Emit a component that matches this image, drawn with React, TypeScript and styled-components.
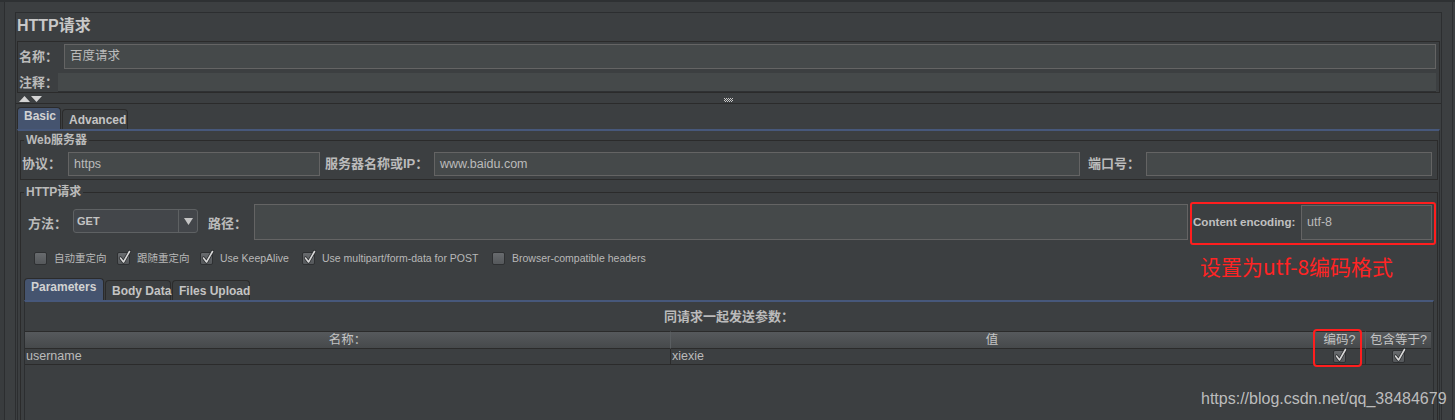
import React from "react";
import styled, { createGlobalStyle } from "styled-components";

const SANS = `"Liberation Sans", "Noto Sans CJK SC", sans-serif`;
const CJK = `"Noto Sans CJK SC", "Liberation Sans", sans-serif`;

const GlobalStyle = createGlobalStyle`
  html, body { margin: 0; padding: 0; background: #3c3f41; }
  body { font-family: ${SANS}; color: #bbbbbb; font-size: 12px; }
  *, *::before, *::after { box-sizing: border-box; }
`;

const Page = styled.div`
  position: relative;
  width: 1455px;
  height: 420px;
  overflow: hidden;
  background: #3c3f41;
  display: flex;
  flex-direction: column;
`;
const TopStrip = styled.div`
  flex: none;
  height: 2px;
  background: #2e3133;
`;
const Body = styled.div`
  flex: 1;
  display: flex;
  align-items: flex-start;
  min-height: 0;
`;
const LeftRail = styled.div`
  flex: none;
  width: 5px;
  align-self: stretch;
  background: #393c3e;
  border-right: 1px solid #2c2e30;
`;
const RightRail = styled.div`
  flex: none;
  width: 3px;
  align-self: stretch;
  margin-left: 10px;
  border-left: 1px solid #2c2e30;
`;
const Main = styled.div`
  flex: none;
  width: 1427px;
  margin: 10px 0 0 10px;
  border: 1px solid #2c2e30;
  border-bottom: none;
  display: flex;
  flex-direction: column;
  & > * { flex: none; }
`;
const Title = styled.div`
  height: 28px;
  padding: 3px 0 0 1px;
  font: bold 16px/20px ${SANS};
  color: #c8c8c8;
`;
const NameBox = styled.div`
  margin: 0 1px;
  border: 1px solid #2b2b2b;
  padding: 2px 3px 0 1px;
  display: flex;
  flex-direction: column;
  gap: 4px;
`;
const FieldRow = styled.div`
  display: flex;
  align-items: center;
`;
const Label = styled.span<{ $w: number }>`
  flex: none;
  width: ${(p) => p.$w}px;
  font: bold 13px/16px ${SANS};
  color: #bbbbbb;
  white-space: nowrap;
`;
const TextBox = styled.div<{ $w?: number; $h: number }>`
  flex: ${(p) => (p.$w ? "none" : "1")};
  width: ${(p) => (p.$w ? `${p.$w}px` : "auto")};
  height: ${(p) => p.$h}px;
  background: #45494a;
  border: 1px solid #646464;
  padding-left: 5px;
  font: 12.5px/${(p) => p.$h - 2}px ${SANS};
  color: #bbbbbb;
  white-space: nowrap;
  overflow: hidden;
`;
const CommentBox = styled.div`
  flex: 1;
  height: 19px;
  background: #45494a;
  border-bottom: 1px solid #2f3133;
`;
const Splitter = styled.div`
  height: 11px;
  border-bottom: 1px solid #2b2b2b;
  display: grid;
  grid-template-columns: 1fr auto 1fr;
  align-items: start;
  padding-top: 3px;
`;
const Arrows = styled.svg`
  margin-left: 3px;
  display: block;
`;
const Grip = styled.svg`
  display: block;
  margin-top: 2px;
`;
const TabStrip = styled.div<{ $indent: number; $top: number }>`
  flex: none;
  display: flex;
  align-items: flex-end;
  gap: 1px;
  margin-top: ${(p) => p.$top}px;
  padding-left: ${(p) => p.$indent}px;
`;
const Tab = styled.div<{ $active?: boolean; $w: number }>`
  flex: none;
  width: ${(p) => p.$w}px;
  height: ${(p) => (p.$active ? 22 : 20)}px;
  padding-left: 6px;
  background: ${(p) => (p.$active ? "#45546f" : "#3c3f41")};
  border: 1px solid #2b2b2b;
  border-bottom: none;
  border-radius: 4px 4px 0 0;
  font: bold 12px/${(p) => (p.$active ? 16 : 20)}px ${SANS};
  color: ${(p) => (p.$active ? "#d2d2d2" : "#c4c4c4")};
  white-space: nowrap;
`;
const TabBody = styled.div<{ $side: number; $minH?: number }>`
  flex: none;
  border-top: 2px solid #47587b;
  border-left: 1px solid #2c2e30;
  border-right: 1px solid #2c2e30;
  margin: 0 ${(p) => p.$side}px;
  min-height: ${(p) => p.$minH ?? 0}px;
  display: flex;
  flex-direction: column;
  & > * { flex: none; }
`;
const Group = styled.fieldset<{ $top: number }>`
  margin: ${(p) => p.$top}px 1px 0 2px;
  padding: 0;
  min-width: 0;
  border: 1px solid #2b2b2b;
  position: relative;
`;
const Legend = styled.legend`
  margin-left: 3px;
  padding: 0 2px;
  font: bold 12px/12px ${SANS};
  color: #bbbbbb;
`;
const ServerRow = styled.div`
  display: flex;
  align-items: center;
  padding: 6px 0 3px 1px;
`;
const RequestRow = styled.div`
  display: flex;
  align-items: center;
  height: 43px;
  margin-top: 4px;
  padding-left: 7px;
`;
const Select = styled.div`
  flex: none;
  width: 125px;
  height: 24px;
  margin-bottom: 5px;
  display: flex;
  border: 1px solid #5e6163;
  border-radius: 3px;
  background: #43464a;
`;
const SelectValue = styled.span`
  flex: 1;
  padding-left: 3px;
  font: bold 11px/22px ${SANS};
  color: #c4c4c4;
`;
const SelectArrow = styled.span`
  flex: none;
  width: 19px;
  border-left: 1px solid #5e6163;
  display: flex;
  align-items: center;
  justify-content: center;
`;
const PathLabel = styled(Label)`
  margin-left: 10px;
`;
const PathBox = styled(TextBox)`
  margin-bottom: 3px;
`;
const EncodingBox = styled.div`
  flex: none;
  width: 246px;
  height: 43px;
  margin-left: 2px;
  border: 2px solid #ff1e1e;
  border-radius: 3px;
  padding: 0 2px 3px 1px;
  display: flex;
  align-items: center;
`;
const EncodingLabel = styled.span`
  flex: none;
  width: 108px;
  font: bold 11.6px/14px ${SANS};
  color: #c0c0c0;
  white-space: nowrap;
`;
const OptionsRow = styled.div`
  display: flex;
  align-items: center;
  height: 13px;
  margin-top: 7px;
  padding-left: 13px;
`;
const Option = styled.label<{ $w?: number }>`
  flex: none;
  width: ${(p) => (p.$w ? `${p.$w}px` : "auto")};
  display: flex;
  align-items: center;
  gap: 7px;
  font: 10.5px/13px ${SANS};
  color: #b8b8b8;
  white-space: nowrap;
`;
const CheckBox = styled.span`
  position: relative;
  flex: none;
  display: inline-block;
  width: 13px;
  height: 13px;
  border: 1px solid #2e3032;
  border-radius: 2px;
  background: linear-gradient(#686b6e, #55585b);
`;
const CheckMark = styled.svg`
  position: absolute;
  left: -1px;
  top: -4px;
  overflow: visible;
`;
const ParamTitle = styled.div`
  height: 29px;
  text-align: center;
  font: bold 13px/29px ${SANS};
  color: #bbbbbb;
`;
const Table = styled.div`
  margin-right: 2px;
  display: grid;
  grid-template-columns: 645px 643px 52px 1fr;
`;
const HeadCell = styled.div`
  height: 18px;
  border-top: 1px solid #2b2b2b;
  border-bottom: 1px solid #2b2b2b;
  border-left: 1px solid #5a5e61;
  background: linear-gradient(#56595c, #46494b);
  text-align: center;
  font: 12.5px/16px ${SANS};
  color: #c4c4c4;
  white-space: nowrap;
  &:first-child { border-left: none; }
`;
const Cell = styled.div<{ $center?: boolean }>`
  height: 16px;
  border-bottom: 1px solid #2b2b2b;
  border-left: 1px solid #2b2b2b;
  padding-left: ${(p) => (p.$center ? 0 : 1)}px;
  display: flex;
  align-items: center;
  justify-content: ${(p) => (p.$center ? "center" : "flex-start")};
  font: 12.5px/15px ${SANS};
  color: #bbbbbb;
  &:nth-child(4n + 1) { border-left: none; }
`;
const Annotation = styled.div`
  position: absolute;
  left: 1200px;
  top: 253px;
  font: 21px/26px ${CJK};
  color: #ff2424;
  white-space: nowrap;
`;
const Highlight = styled.div`
  position: absolute;
  left: 1313px;
  top: 329px;
  width: 49px;
  height: 38px;
  border: 2px solid #ff1e1e;
  border-radius: 4px;
`;
const Watermark = styled.div`
  position: absolute;
  left: 1201px;
  top: 390px;
  font: 16px/18px ${SANS};
  color: rgba(205, 205, 205, 0.9);
  white-space: nowrap;
`;

function Check({ on }: { on?: boolean }) {
  return (
    <CheckBox>
      {on && (
        <CheckMark width="14" height="16" viewBox="0 0 14 16">
          <path d="M3.5 9 L6.5 13 L12.5 2.5" fill="none" stroke="#2a2c2e" strokeWidth="3.2" strokeLinecap="round" strokeLinejoin="round" />
          <path d="M3.5 9 L6.5 13 L12.5 2.5" fill="none" stroke="#d8d8d8" strokeWidth="1.6" strokeLinecap="round" strokeLinejoin="round" />
        </CheckMark>
      )}
    </CheckBox>
  );
}

const gripDots: [number, number][] = [];
for (let y = 0; y < 4; y++) {
  for (let x = y % 2; x < 9; x += 2) gripDots.push([x, y]);
}

export default function App() {
  return (
    <>
      <GlobalStyle />
      <Page>
        <TopStrip />
        <Body>
          <LeftRail />
          <Main>
            <Title>HTTP请求</Title>
            <NameBox>
              <FieldRow>
                <Label $w={45}>名称：</Label>
                <TextBox $h={25}>百度请求</TextBox>
              </FieldRow>
              <FieldRow>
                <Label $w={39}>注释：</Label>
                <CommentBox />
              </FieldRow>
            </NameBox>
            <Splitter>
              <Arrows width="24" height="6" viewBox="0 0 24 6">
                <polygon points="0,6 5.5,0 11,6" fill="#d4d4d4" />
                <polygon points="12,0 23,0 17.5,6" fill="#d4d4d4" />
              </Arrows>
              <Grip width="9" height="4" viewBox="0 0 9 4">
                {gripDots.map(([x, y]) => (
                  <rect key={`${x}-${y}`} x={x} y={y} width="1" height="1" fill="#c8c8c8" />
                ))}
              </Grip>
              <span />
            </Splitter>
            <TabStrip $indent={1} $top={3}>
              <Tab $active $w={44}>Basic</Tab>
              <Tab $w={66}>Advanced</Tab>
            </TabStrip>
            <TabBody $side={1} $minH={400}>
              <Group $top={3}>
                <Legend>Web服务器</Legend>
                <ServerRow>
                  <Label $w={46}>协议：</Label>
                  <TextBox $w={252} $h={24}>https</TextBox>
                  <Label $w={114} style={{ paddingLeft: 5 }}>服务器名称或IP：</Label>
                  <TextBox $w={646} $h={24}>www.baidu.com</TextBox>
                  <Label $w={66} style={{ paddingLeft: 8 }}>端口号：</Label>
                  <TextBox $w={286} $h={24} />
                </ServerRow>
              </Group>
              <Group $top={6}>
                <Legend>HTTP请求</Legend>
                <RequestRow>
                  <Label $w={45}>方法：</Label>
                  <Select>
                    <SelectValue>GET</SelectValue>
                    <SelectArrow>
                      <svg width="9" height="7" viewBox="0 0 9 7">
                        <polygon points="0,0 9,0 4.5,7" fill="#c4c4c4" />
                      </svg>
                    </SelectArrow>
                  </Select>
                  <PathLabel $w={46}>路径：</PathLabel>
                  <PathBox $w={934} $h={36} />
                  <EncodingBox>
                    <EncodingLabel>Content encoding:</EncodingLabel>
                    <TextBox $w={131} $h={35}>utf-8</TextBox>
                  </EncodingBox>
                </RequestRow>
                <OptionsRow>
                  <Option $w={83}><Check />自动重定向</Option>
                  <Option $w={83}><Check on />跟随重定向</Option>
                  <Option $w={102}><Check on />Use KeepAlive</Option>
                  <Option $w={190}><Check on />Use multipart/form-data for POST</Option>
                  <Option><Check />Browser-compatible headers</Option>
                </OptionsRow>
                <TabStrip $indent={3} $top={13}>
                  <Tab $active $w={80}>Parameters</Tab>
                  <Tab $w={66}>Body Data</Tab>
                  <Tab $w={78}>Files Upload</Tab>
                </TabStrip>
                <TabBody $side={3} $minH={200}>
                  <ParamTitle>同请求一起发送参数：</ParamTitle>
                  <Table>
                    <HeadCell>名称：</HeadCell>
                    <HeadCell>值</HeadCell>
                    <HeadCell>编码?</HeadCell>
                    <HeadCell>包含等于?</HeadCell>
                    <Cell>username</Cell>
                    <Cell>xiexie</Cell>
                    <Cell $center><Check on /></Cell>
                    <Cell $center><Check on /></Cell>
                  </Table>
                </TabBody>
              </Group>
            </TabBody>
          </Main>
          <RightRail />
        </Body>
        <Annotation>设置为utf-8编码格式</Annotation>
        <Highlight />
        <Watermark>https://blog.csdn.net/qq_38484679</Watermark>
      </Page>
    </>
  );
}
